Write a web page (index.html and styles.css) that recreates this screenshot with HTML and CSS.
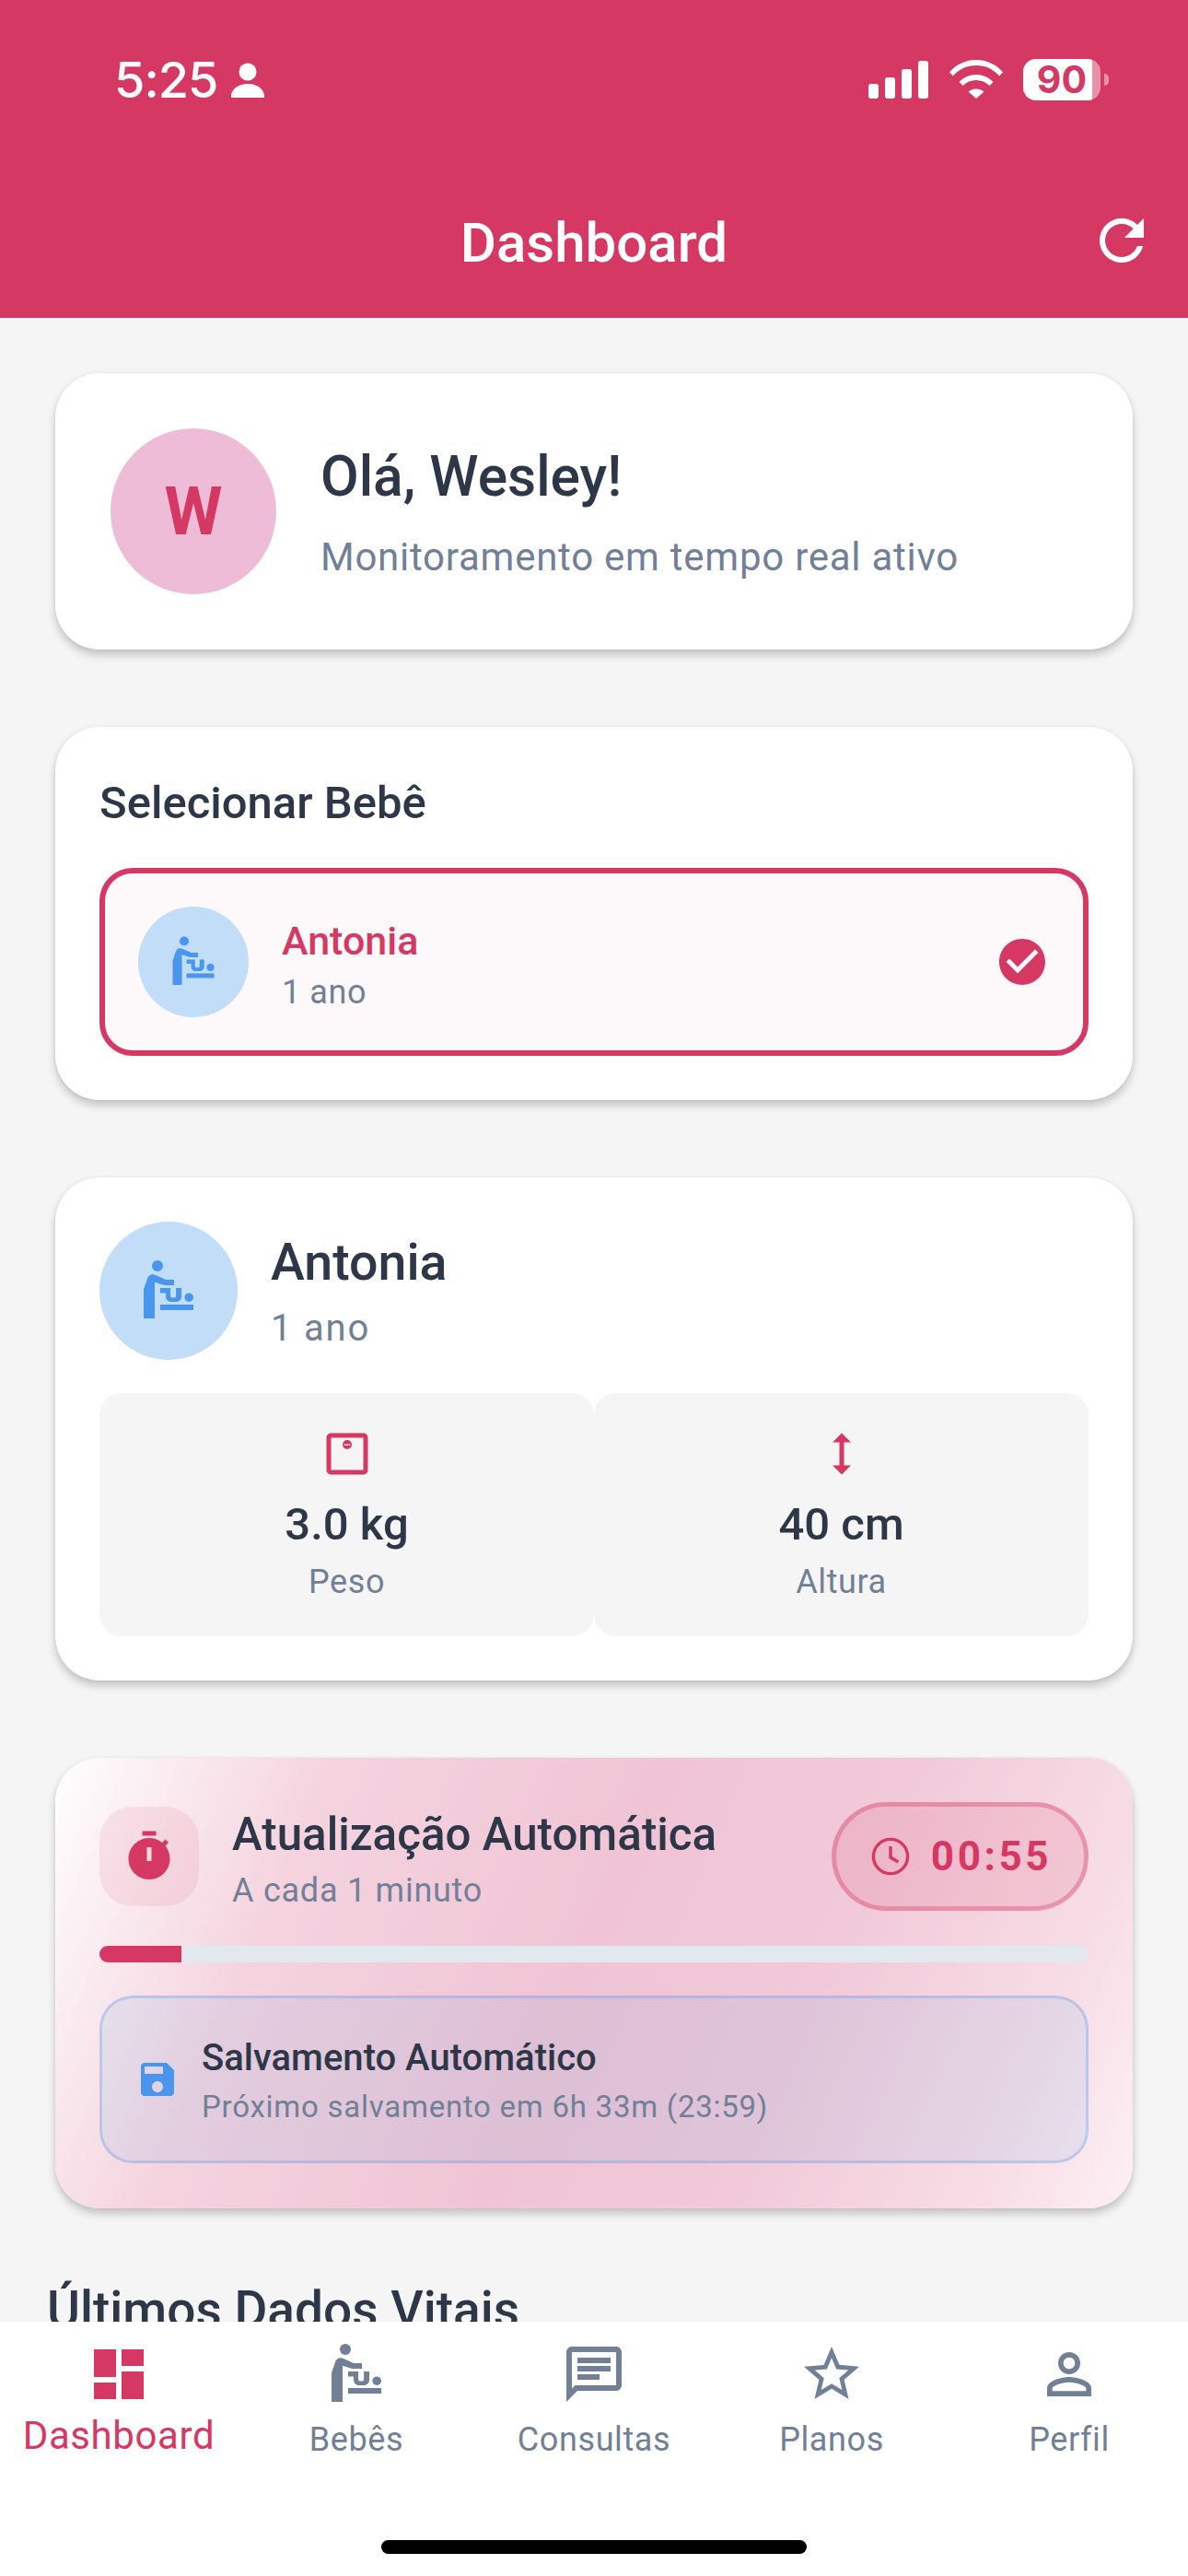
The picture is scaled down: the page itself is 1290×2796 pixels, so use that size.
FILE: index.html
```html
<!DOCTYPE html>
<html lang="pt-BR">
<head>
<meta charset="utf-8">
<title>Dashboard</title>
<link rel="stylesheet" href="styles.css">
</head>
<body>
<div class="app">
  <header class="header">
    <div class="status">
      <div class="status-left">
        <span class="time">5:25</span>
        <svg class="status-person" viewBox="0 0 36 38"><circle cx="18" cy="10" r="9.5"/><path d="M0 38c-1-9 8-15 18-15s19 6 18 15z"/></svg>
      </div>
      <div class="status-right">
        <svg class="signal" viewBox="0 0 65 41"><rect x="0" y="25" width="11" height="16" rx="3"/><rect x="18" y="18" width="11" height="23" rx="3"/><rect x="36" y="9" width="11" height="32" rx="3"/><rect x="54" y="0" width="11" height="41" rx="3"/></svg>
        <svg class="wifi" viewBox="0 0 58 42"><path d="M0 13.500C7.500 4.500 18 0 29 0s21.500 4.500 29 13.500l-3.800 4C47.500 9.800 38.500 6 29 6S10.500 9.800 3.800 17.500z"/><path d="M10.500 24C15.500 18.700 22 16 29 16s13.500 2.700 18.500 8l-4 4C39.500 24 34.500 22 29 22s-10.500 2-14.500 6z"/><path d="M20.500 34.500C23 32.500 26 31.500 29 31.500s6 1 8.500 3L29 42z"/></svg>
        <div class="battery"><span class="battery-text">90</span><span class="battery-nub"></span></div>
      </div>
    </div>
    <div class="appbar">
      <h1 class="appbar-title">Dashboard</h1>
      <svg class="refresh" viewBox="0 0 24 24"><path d="M17.650 6.350C16.200 4.900 14.210 4 12 4c-4.420 0-7.990 3.580-7.990 8s3.570 8 7.990 8c3.730 0 6.840-2.550 7.730-6h-2.080c-.82 2.330-3.040 4-5.650 4-3.310 0-6-2.690-6-6s2.690-6 6-6c1.660 0 3.140.69 4.220 1.780L13 11h7V4l-2.350 2.350z"/></svg>
    </div>
  </header>

  <main class="content">
    <section class="card welcome">
      <div class="avatar-w">W</div>
      <div class="welcome-text">
        <h2 class="welcome-title">Olá, Wesley!</h2>
        <p class="welcome-sub">Monitoramento em tempo real ativo</p>
      </div>
    </section>

    <section class="card select">
      <h3 class="select-title">Selecionar Bebê</h3>
      <div class="baby-option">
        <div class="baby-avatar small">
          <svg class="icon-baby-s" viewBox="0 0 24 24"><use href="#baby"/></svg>
        </div>
        <div class="option-text">
          <div class="option-name">Antonia</div>
          <div class="option-age">1 ano</div>
        </div>
        <svg class="check" viewBox="0 0 24 24"><path d="M12 2C6.480 2 2 6.480 2 12s4.480 10 10 10 10-4.480 10-10S17.520 2 12 2zm-2 15l-5-5 1.410-1.410L10 14.170l7.590-7.590L19 8l-9 9z"/></svg>
      </div>
    </section>

    <section class="card baby">
      <div class="baby-head">
        <div class="baby-avatar large">
          <svg class="icon-baby-l" viewBox="0 0 24 24"><use href="#baby"/></svg>
        </div>
        <div class="baby-text">
          <div class="baby-name">Antonia</div>
          <div class="baby-age">1 ano</div>
        </div>
      </div>
      <div class="stats">
        <div class="stat">
          <svg class="stat-icon" viewBox="0 0 24 24"><path d="M19 3H5C3.900 3 3 3.900 3 5v14c0 1.100.9 2 2 2h14c1.100 0 2-.9 2-2V5c0-1.100-.9-2-2-2zm0 16H5V5h14v14z"/><path d="M12 6a2 2 0 1 0 0 4 2 2 0 0 0 0-4z"/><g class="scale-dots"><rect x="10.700" y="7.700" width=".7" height=".7"/><rect x="11.650" y="7.700" width=".7" height=".7"/><rect x="12.600" y="7.700" width=".7" height=".7"/></g></svg>
          <div class="stat-value">3.0 kg</div>
          <div class="stat-label">Peso</div>
        </div>
        <div class="stat">
          <svg class="stat-icon" viewBox="0 0 24 24"><path d="M13 6.990h3L12 3 8 6.990h3v10.020H8L12 21l4-3.990h-3z"/></svg>
          <div class="stat-value">40 cm</div>
          <div class="stat-label">Altura</div>
        </div>
      </div>
    </section>

    <section class="card auto">
      <div class="auto-head">
        <div class="auto-icon">
          <svg class="timer-icon" viewBox="0 0 24 24"><path fill-rule="evenodd" d="M15 1H9v2h6V1zm-4 13h2V8h-2v6zm8.030-6.610l1.420-1.420c-.43-.51-.9-.99-1.410-1.410l-1.420 1.420C16.070 4.740 14.120 4 12 4c-4.970 0-9 4.030-9 9s4.020 9 9 9 9-4.030 9-9c0-2.120-.74-4.070-1.970-5.610z"/></svg>
        </div>
        <div class="auto-text">
          <div class="auto-title">Atualização Automática</div>
          <div class="auto-sub">A cada 1 minuto</div>
        </div>
        <div class="pill">
          <svg class="clock" viewBox="0 0 24 24"><circle cx="12" cy="12" r="9.300"/><path d="M12 6.500V12.500L16.200 15"/></svg>
          <span class="pill-time">00:55</span>
        </div>
      </div>
      <div class="progress"><div class="progress-fill" style="width:8.3%"></div></div>
      <div class="save">
        <svg class="save-icon" viewBox="0 0 24 24"><path d="M17 3H5c-1.110 0-2 .9-2 2v14c0 1.100.89 2 2 2h14c1.100 0 2-.9 2-2V7l-4-4zm-5 16c-1.660 0-3-1.340-3-3s1.340-3 3-3 3 1.340 3 3-1.340 3-3 3zm3-10H5V5h10v4z"/></svg>
        <div class="save-text">
          <div class="save-title">Salvamento Automático</div>
          <div class="save-sub">Próximo salvamento em 6h 33m (23:59)</div>
        </div>
      </div>
    </section>

    <h2 class="vitals">Últimos Dados Vitais</h2>
  </main>

  <nav class="nav">
    <div class="nav-item active">
      <svg class="nav-icon" viewBox="0 0 24 24"><path d="M3 13h8V3H3v10zm0 8h8v-6H3v6zm10 0h8V11h-8v10zm0-18v6h8V3h-8z"/></svg>
      <span class="nav-label">Dashboard</span>
    </div>
    <div class="nav-item">
      <svg class="nav-icon" viewBox="0 0 24 24"><use href="#baby"/></svg>
      <span class="nav-label">Bebês</span>
    </div>
    <div class="nav-item">
      <svg class="nav-icon" viewBox="0 0 24 24"><path d="M20 2H4c-1.100 0-2 .9-2 2v18l4-4h14c1.100 0 2-.9 2-2V4c0-1.100-.9-2-2-2zm0 14H5.170L4 17.170V4h16v12zM6 12h8v2H6zm0-3h12v2H6zm0-3h12v2H6z"/></svg>
      <span class="nav-label">Consultas</span>
    </div>
    <div class="nav-item">
      <svg class="nav-icon" viewBox="0 0 24 24"><path d="M22 9.240l-7.190-.62L12 2 9.190 8.630 2 9.240l5.460 4.730L5.820 21 12 17.270 18.180 21l-1.630-7.030L22 9.240zM12 15.400l-3.760 2.270 1-4.280-3.320-2.880 4.380-.38L12 6.100l1.710 4.040 4.380.38-3.320 2.880 1 4.280L12 15.400z"/></svg>
      <span class="nav-label">Planos</span>
    </div>
    <div class="nav-item">
      <svg class="nav-icon" viewBox="0 0 24 24"><path d="M12 5.900c1.160 0 2.100.94 2.100 2.100s-.94 2.100-2.100 2.100S9.900 9.160 9.900 8s.94-2.100 2.100-2.100m0 9c2.970 0 6.100 1.460 6.100 2.100v1.100H5.900V17c0-.64 3.130-2.100 6.100-2.100M12 4C9.790 4 8 5.790 8 8s1.790 4 4 4 4-1.790 4-4-1.790-4-4-4zm0 9c-2.670 0-8 1.340-8 4v3h16v-3c0-2.660-5.330-4-8-4z"/></svg>
      <span class="nav-label">Perfil</span>
    </div>
    <div class="home-indicator"></div>
  </nav>
</div>

<svg class="defs" aria-hidden="true">
  <symbol id="baby" viewBox="0 0 24 24">
    <circle cx="8" cy="3" r="2"/>
    <path d="M3 22V11.500L4.400 7.400C4.700 6.500 5.600 5.900 6.500 6.100L7.700 6.500L11 8H14V10H10.500L7 8.900V22Z"/>
    <path d="M9 11H12.700V13.800C12.700 14.300 13 14.500 13.500 14.500H14C14.500 14.500 14.700 14.200 14.700 13.800V11H16.700V14C16.700 15.200 15.800 16 14.700 16H13C11.800 16 11 15.200 11 14V12.800H9Z"/>
    <circle cx="19.400" cy="14.400" r="1.600"/>
    <rect x="9" y="17" width="12" height="2"/>
  </symbol>
</svg>
</body>
</html>
```
FILE: styles.css
```css
* { box-sizing: border-box; margin: 0; padding: 0; }
html, body { width: 1290px; height: 2796px; overflow: hidden; }
body { font-family: Roboto, "Noto Sans", sans-serif; background: #f5f5f5; color: #2d3748; }
.defs { display: none; }
svg { display: block; fill: currentColor; flex: none; }

.app { width: 1290px; height: 2796px; display: flex; flex-direction: column; }

/* Header */
.header { height: 345px; background: #d63864; color: #fff; flex: none; }
.status { height: 225px; padding: 64px 95px 0 124px; display: flex; justify-content: space-between; align-items: flex-start; }
.status-left { display: flex; align-items: center; gap: 15px; height: 45px; }
.time { font-family: Inter, sans-serif; font-size: 54px; font-weight: 500; line-height: 45px; letter-spacing: -1px; }
.status-person { width: 36px; height: 38px; }
.status-right { display: flex; align-items: flex-start; }
.signal { width: 65px; height: 41px; margin-top: 2px; }
.wifi { width: 58px; height: 42px; margin: 1px 0 0 23px; }
.battery { width: 84px; height: 45px; margin-left: 22px; border-radius: 14px; background: linear-gradient(90deg, #fff 89%, rgba(255,255,255,.45) 89%); position: relative; display: flex; align-items: center; justify-content: center; }
.battery-text { font-family: Inter, sans-serif; font-size: 41px; font-weight: 700; line-height: 45px; color: #d63864; }
.battery-nub { position: absolute; right: -9px; top: 16px; width: 5px; height: 13px; border-radius: 0 5px 5px 0; background: rgba(255,255,255,.45); }
.appbar { height: 72px; padding-right: 36px; display: flex; align-items: center; justify-content: flex-end; position: relative; }
.appbar-title { position: absolute; left: 0; right: 0; top: 3px; text-align: center; font-size: 60px; font-weight: 500; line-height: 72px; }
.refresh { width: 72px; height: 72px; }

/* Content */
.content { flex: 1; min-height: 0; overflow: hidden; padding: 60px 60px 0; display: flex; flex-direction: column; gap: 84px; }
.card { background: #fff; border-radius: 48px; box-shadow: 0 6px 10px rgba(0,0,0,.2), 0 0 4px rgba(0,0,0,.06); flex: none; }

.welcome { height: 300px; padding: 60px; display: flex; align-items: center; gap: 48px; }
.avatar-w { width: 180px; height: 180px; border-radius: 50%; background: #eebcd7; color: #d63864; font-size: 72px; font-weight: 700; display: flex; align-items: center; justify-content: center; flex: none; }
.welcome-title { font-size: 60.500px; font-weight: 500; line-height: 72px; margin-top: 2px; }
.welcome-sub { font-size: 42px; line-height: 50px; color: #718096; margin-top: 26px; letter-spacing: .75px; }

.select { height: 405px; padding: 48px; }
.select-title { font-size: 49px; font-weight: 500; line-height: 56px; padding-top: 7px; margin-bottom: 42px; }
.baby-option { height: 204px; border: 6px solid #d63864; border-radius: 36px; background: #fdf8fa; padding: 0 36px; display: flex; align-items: center; gap: 36px; }
.baby-avatar { border-radius: 50%; background: #c1ddf8; color: #4a96ef; display: flex; align-items: center; justify-content: center; flex: none; }
.baby-avatar.small { width: 120px; height: 120px; }
.baby-avatar.large { width: 150px; height: 150px; }
.icon-baby-s { width: 60px; height: 60px; }
.icon-baby-l { width: 72px; height: 72px; }
.option-text { flex: 1; padding-top: 5px; }
.option-name { font-size: 43px; font-weight: 500; line-height: 50px; color: #d63864; }
.option-age { font-size: 36px; line-height: 42px; color: #718096; margin-top: 10px; letter-spacing: .6px; }
.check { width: 60px; height: 60px; color: #d63864; }

.baby { height: 546px; padding: 48px; }
.baby-head { display: flex; align-items: center; gap: 36px; height: 150px; }
.baby-text { padding-top: 2px; }
.baby-name { font-size: 55.500px; font-weight: 500; line-height: 64px; }
.baby-age { font-size: 40px; line-height: 48px; color: #718096; margin-top: 15px; letter-spacing: 1.8px; }
.stats { display: flex; margin-top: 36px; height: 264px; }
.stat { flex: 1; background: #f5f5f5; border-radius: 24px; padding-top: 36px; display: flex; flex-direction: column; align-items: center; }
.stat-icon { width: 60px; height: 60px; color: #d63864; }
.scale-dots { fill: #f5f5f5; }
.stat-value { font-size: 49px; font-weight: 500; line-height: 58px; margin-top: 18px; }
.stat-label { font-size: 36px; line-height: 42px; color: #718096; margin-top: 12px; letter-spacing: .6px; }

.auto { height: 489px; padding: 48px; background: linear-gradient(112.7deg, #fff 0%, #f4d3df 22%, #f0c4d4 48%, #f1c9d8 68%, #f7dde6 88%, #fdf0f5 100%); }
.auto-head { display: flex; align-items: center; height: 118px; gap: 36px; }
.auto-icon { width: 108px; height: 108px; border-radius: 36px; background: rgba(214,56,100,.1); color: #d63864; display: flex; align-items: center; justify-content: center; flex: none; }
.timer-icon { width: 60px; height: 60px; }
.auto-text { flex: 1; min-width: 0; padding-top: 6px; }
.auto-title { font-size: 49.300px; font-weight: 500; line-height: 56px; white-space: nowrap; }
.auto-sub { font-size: 36px; line-height: 42px; color: #718096; margin-top: 12px; letter-spacing: .75px; }
.pill { width: 279px; height: 118px; border-radius: 59px; border: 5px solid rgba(214,56,100,.35); background: rgba(214,56,100,.12); display: flex; align-items: center; justify-content: center; gap: 20px; color: #d63864; flex: none; }
.clock { width: 48px; height: 48px; fill: none; stroke: currentColor; stroke-width: 1.700; }
.pill-time { font-size: 44px; font-weight: 700; letter-spacing: 3.600px; line-height: 50px; }
.progress { height: 18px; margin-top: 38px; border-radius: 9px; background: #e2e8f0; overflow: hidden; }
.progress-fill { height: 100%; background: #d63864; }
.save { height: 182px; margin-top: 36px; border: 3px solid rgba(90,150,235,.3); border-radius: 36px; background: rgba(66,153,225,.1); padding: 0 36px; display: flex; align-items: center; gap: 24px; }
.save-icon { width: 48px; height: 48px; color: #4a96ef; }
.save-text { padding-top: 3px; }
.save-title { font-size: 40px; font-weight: 500; line-height: 46px; }
.save-sub { font-size: 33px; line-height: 40px; color: #718096; margin-top: 10px; letter-spacing: .75px; }

.vitals { font-size: 55px; font-weight: 500; line-height: 72px; margin: -10px 0 0 -9px; flex: none; }

/* Bottom nav */
.nav { height: 276px; background: #fff; flex: none; display: flex; position: relative; color: #718096; }
.nav-item { width: 258px; height: 276px; padding-top: 21px; display: flex; flex-direction: column; align-items: center; }
.nav-icon { width: 72px; height: 72px; }
.nav-label { font-size: 36px; line-height: 42px; margin-top: 14px; letter-spacing: .6px; }
.nav-item.active { color: #d63864; }
.nav-item.active .nav-label { font-size: 42px; line-height: 48px; margin-top: 7px; letter-spacing: .6px; }
.home-indicator { position: absolute; left: 414px; top: 237px; width: 462px; height: 15px; border-radius: 8px; background: #000; }
```
